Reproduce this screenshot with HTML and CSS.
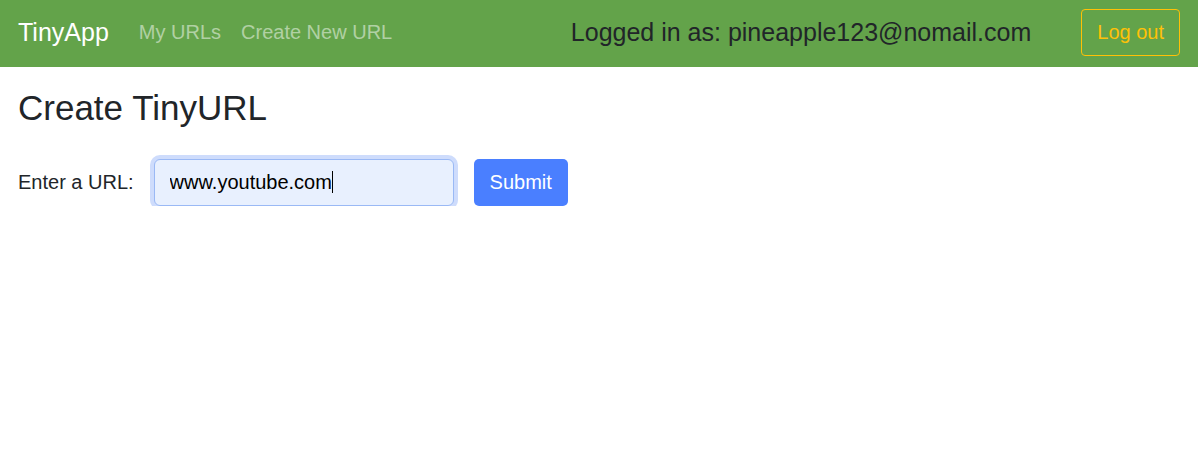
FILE: index.html
```html
<!DOCTYPE html>
<html>
<head>
<meta charset="utf-8">
<title>TinyApp</title>
<link rel="stylesheet" href="styles.css">
</head>
<body>
<nav class="navbar">
  <a class="brand" href="#">TinyApp</a>
  <div class="nav-links">
    <a href="#">My URLs</a>
    <a href="#">Create New URL</a>
  </div>
  <div class="user">Logged in as: pineapple123@nomail.com</div>
  <button class="logout">Log out</button>
</nav>
<main class="content">
  <h1>Create TinyURL</h1>
  <form class="url-form">
    <label for="url">Enter a URL:</label>
    <div class="input-wrap">
      <input id="url" class="url-input" type="text" value="www.youtube.com">
      <span class="caret"></span>
    </div>
    <button type="submit" class="submit">Submit</button>
  </form>
</main>
</body>
</html>
```

FILE: styles.css
```css
* { box-sizing: border-box; }
body {
  margin: 0;
  font-family: "Liberation Sans", Arial, sans-serif;
  color: #212529;
  background: #fff;
}
.navbar {
  height: 67px;
  background: #63a34a;
  display: flex;
  align-items: center;
  padding: 0 18px 2px;
}
.brand {
  font-size: 25px;
  color: #fff;
  text-decoration: none;
  margin-right: 30px;
}
.nav-links {
  display: flex;
  gap: 20px;
}
.nav-links a {
  font-size: 20px;
  color: rgba(255,255,255,0.5);
  text-decoration: none;
}
.user {
  margin-left: auto;
  font-size: 25px;
  color: #212529;
  margin-right: 50px;
}
.logout {
  font-family: inherit;
  font-size: 20px;
  color: #ffc107;
  background: transparent;
  border: 1px solid #ffc107;
  border-radius: 4px;
  height: 47px;
  padding: 0 15px;
}
.content {
  padding: 0 18px;
}
h1 {
  font-size: 35px;
  font-weight: 400;
  margin: 21px 0 31px;
}
.url-form {
  display: flex;
  align-items: center;
}
label { font-size: 20px; margin-right: 20px; }
.input-wrap {
  position: relative;
  margin-right: 20px;
}
.url-input {
  display: block;
  width: 300px;
  height: 47px;
  font-family: inherit;
  font-size: 20px;
  color: #000;
  padding: 0 15px;
  background: #e8f0fe;
  border: 1px solid #9ab9f5;
  border-radius: 6px;
  box-shadow: 0 0 0 4px #cedcfc;
  outline: none;
}
.caret {
  position: absolute;
  left: 178px;
  top: 12px;
  width: 1px;
  height: 22px;
  background: #000;
}
.submit {
  font-family: inherit;
  font-size: 20px;
  color: #fff;
  background: #4a7fff;
  border: none;
  border-radius: 5px;
  height: 47px;
  padding: 0 16px;
}
```
